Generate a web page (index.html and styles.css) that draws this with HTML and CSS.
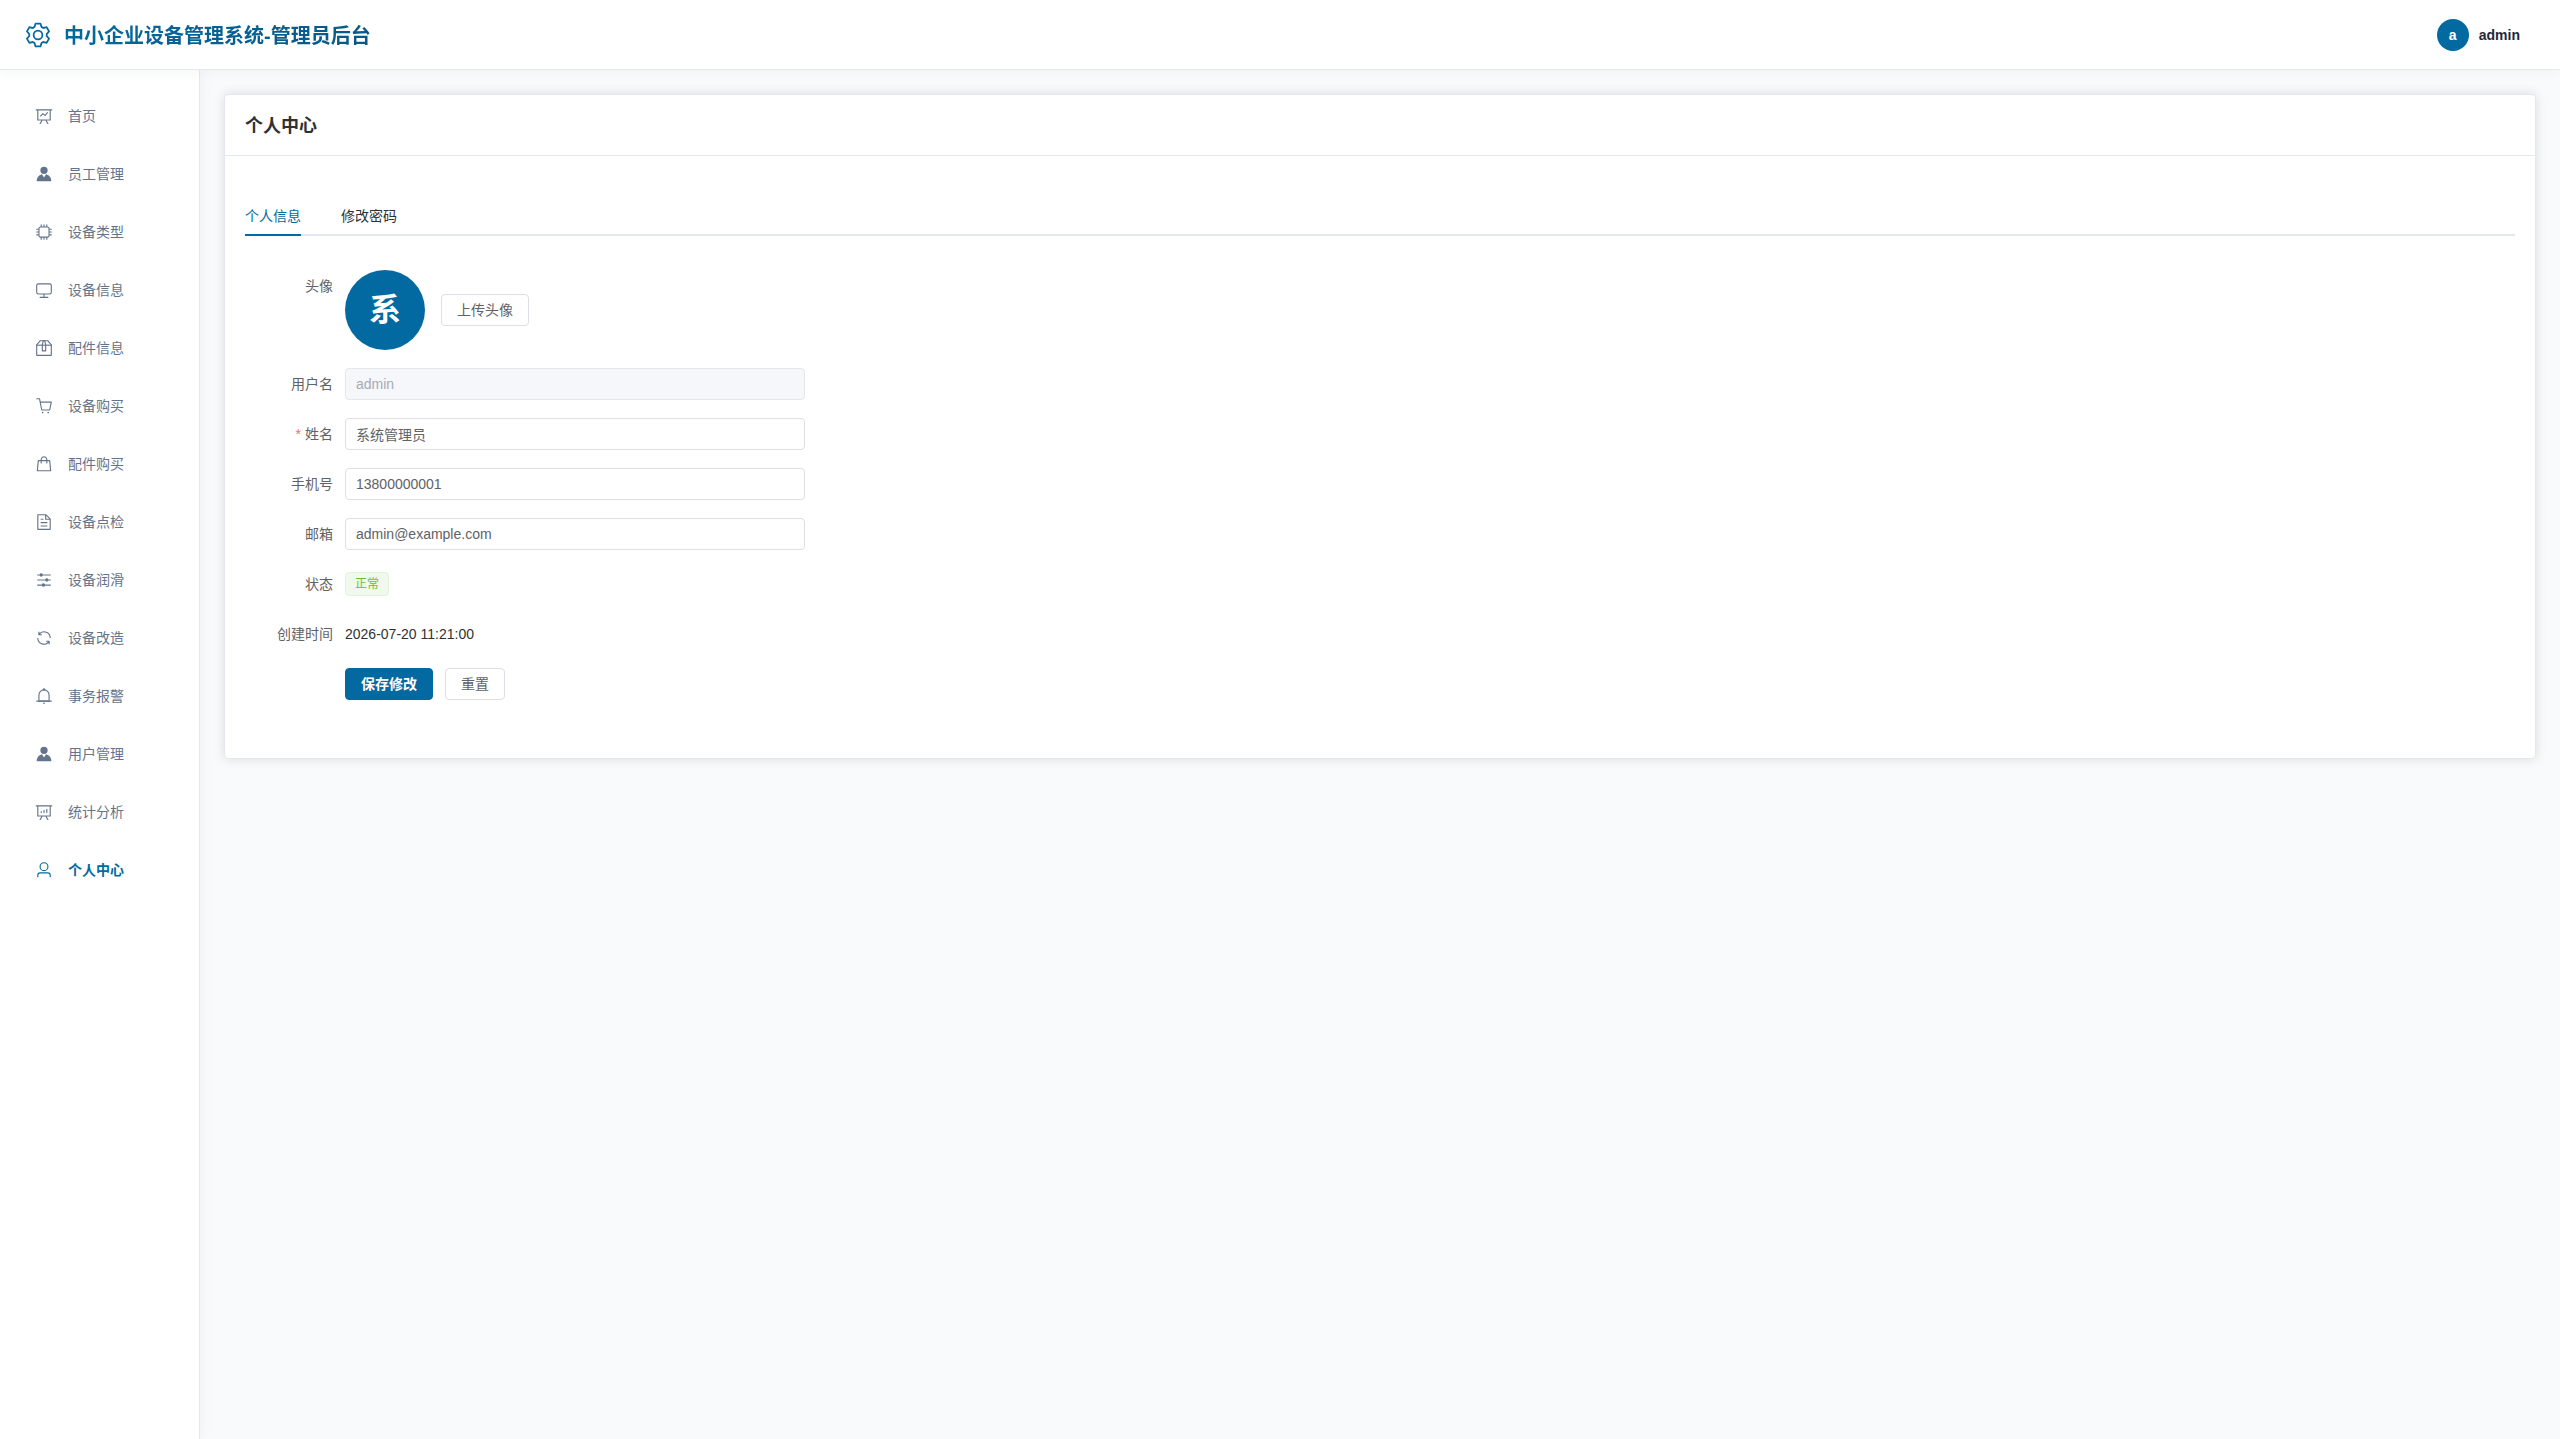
FILE: index.html
```html
<!DOCTYPE html>
<html lang="zh-CN">
	<head>
		<meta charset="UTF-8">
		<title>个人中心</title>
		<link rel="stylesheet" href="styles.css">
	</head>
	<body>
		<!-- 顶部 -->
		<header class="header">
			<div class="logo">
				<svg class="logo-icon" viewBox="0 0 1024 1024"><path d="M600.704 64a32 32 0 0 1 30.464 22.208l35.2 109.376c14.784 7.232 28.928 15.36 42.432 24.512l112.384-24.192a32 32 0 0 1 34.432 15.36L944.32 364.8a32 32 0 0 1-4.032 37.504l-77.12 85.12a357.12 357.12 0 0 1 0 49.024l77.12 85.248a32 32 0 0 1 4.032 37.504l-88.704 153.6a32 32 0 0 1-34.432 15.296L708.8 803.904c-13.44 9.088-27.648 17.28-42.368 24.512l-35.264 109.376A32 32 0 0 1 600.704 960H423.296a32 32 0 0 1-30.464-22.208L357.696 828.48a351.616 351.616 0 0 1-42.56-24.64l-112.32 24.256a32 32 0 0 1-34.432-15.36L79.68 659.2a32 32 0 0 1 4.032-37.504l77.12-85.248a357.12 357.12 0 0 1 0-48.896l-77.12-85.248A32 32 0 0 1 79.68 364.8l88.704-153.6a32 32 0 0 1 34.432-15.296l112.32 24.256c13.568-9.152 27.776-17.408 42.56-24.64l35.2-109.312A32 32 0 0 1 423.232 64H600.64zm-23.424 64H446.72l-36.352 113.088-24.512 11.968a294.113 294.113 0 0 0-34.816 20.096l-22.656 15.36-116.224-25.088-65.28 113.152 79.68 88.192-1.92 27.136a293.12 293.12 0 0 0 0 40.192l1.92 27.136-79.808 88.192 65.344 113.152 116.224-25.024 22.656 15.296a294.113 294.113 0 0 0 34.816 20.096l24.512 11.968L446.72 896h130.688l36.48-113.152 24.448-11.904a288.282 288.282 0 0 0 34.752-20.096l22.592-15.296 116.288 25.024 65.28-113.152-79.744-88.192 1.92-27.136a293.12 293.12 0 0 0 0-40.256l-1.92-27.136 79.808-88.128-65.344-113.152-116.288 24.96-22.592-15.232a287.616 287.616 0 0 0-34.752-20.096l-24.448-11.904L577.344 128zM512 320a192 192 0 1 1 0 384 192 192 0 0 1 0-384m0 64a128 128 0 1 0 0 256 128 128 0 0 0 0-256"/></svg>
				<span class="logo-text">中小企业设备管理系统-管理员后台</span>
			</div>
			<div class="user">
				<span class="user-avatar">a</span>
				<span>admin</span>
			</div>
		</header>

		<div class="container">
			<!-- 左侧菜单 -->
			<nav class="menu">
				<a href="#"><svg viewBox="0 0 1024 1024"><path d="M359.168 768H160a32 32 0 0 1-32-32V192H64a32 32 0 0 1 0-64h896a32 32 0 1 1 0 64h-64v544a32 32 0 0 1-32 32H665.216l110.848 192h-73.856L591.36 768H433.024L322.176 960H248.32zM832 192H192v512h640zM342.656 534.656a32 32 0 1 1-45.312-45.312L444.992 341.76l125.44 94.08L679.04 300.032a32 32 0 1 1 49.92 39.936L581.632 524.224 451.008 426.24 342.656 534.592z"/></svg>首页</a>
				<a href="#"><svg viewBox="0 0 1024 1024"><path d="M628.736 528.896A416 416 0 0 1 928 928H96a415.872 415.872 0 0 1 299.264-399.104L512 704zM720 304a208 208 0 1 1-416 0 208 208 0 0 1 416 0"/></svg>员工管理</a>
				<a href="#"><svg viewBox="0 0 1024 1024"><path d="M320 256a64 64 0 0 0-64 64v384a64 64 0 0 0 64 64h384a64 64 0 0 0 64-64V320a64 64 0 0 0-64-64zm0-64h384a128 128 0 0 1 128 128v384a128 128 0 0 1-128 128H320a128 128 0 0 1-128-128V320a128 128 0 0 1 128-128"/><path d="M512 64a32 32 0 0 1 32 32v128h-64V96a32 32 0 0 1 32-32m160 0a32 32 0 0 1 32 32v128h-64V96a32 32 0 0 1 32-32m-320 0a32 32 0 0 1 32 32v128h-64V96a32 32 0 0 1 32-32m160 896a32 32 0 0 1-32-32V800h64v128a32 32 0 0 1-32 32m160 0a32 32 0 0 1-32-32V800h64v128a32 32 0 0 1-32 32m-320 0a32 32 0 0 1-32-32V800h64v128a32 32 0 0 1-32 32M64 512a32 32 0 0 1 32-32h128v64H96a32 32 0 0 1-32-32m0-160a32 32 0 0 1 32-32h128v64H96a32 32 0 0 1-32-32m0 320a32 32 0 0 1 32-32h128v64H96a32 32 0 0 1-32-32m896-160a32 32 0 0 1-32 32H800v-64h128a32 32 0 0 1 32 32m0-160a32 32 0 0 1-32 32H800v-64h128a32 32 0 0 1 32 32m0 320a32 32 0 0 1-32 32H800v-64h128a32 32 0 0 1 32 32"/></svg>设备类型</a>
				<a href="#"><svg viewBox="0 0 1024 1024"><path d="M544 768v128h192a32 32 0 1 1 0 64H288a32 32 0 1 1 0-64h192V768H192A128 128 0 0 1 64 640V256a128 128 0 0 1 128-128h640a128 128 0 0 1 128 128v384a128 128 0 0 1-128 128zM192 192a64 64 0 0 0-64 64v384a64 64 0 0 0 64 64h640a64 64 0 0 0 64-64V256a64 64 0 0 0-64-64z"/></svg>设备信息</a>
				<a href="#"><svg viewBox="0 0 1024 1024"><path d="M317.056 128 128 344.064V896h768V344.064L706.944 128zm-14.528-64h418.944a32 32 0 0 1 24.064 10.88l206.528 236.096A32 32 0 0 1 960 332.032V928a32 32 0 0 1-32 32H96a32 32 0 0 1-32-32V332.032a32 32 0 0 1 7.936-21.12L278.4 75.008A32 32 0 0 1 302.528 64z"/><path d="M64 320h896v64H64z"/><path d="M448 327.872V640h128V327.872L526.08 128h-28.16zM448 64h128l64 256v352a32 32 0 0 1-32 32H416a32 32 0 0 1-32-32V320z"/></svg>配件信息</a>
				<a href="#"><svg viewBox="0 0 1024 1024"><path d="M432 928a48 48 0 1 1 0-96 48 48 0 0 1 0 96m320 0a48 48 0 1 1 0-96 48 48 0 0 1 0 96M96 128a32 32 0 0 1 0-64h160a32 32 0 0 1 31.36 25.728L320.64 256H928a32 32 0 0 1 31.296 38.72l-96 448A32 32 0 0 1 832 768H384a32 32 0 0 1-31.36-25.728L229.76 128zm314.24 576h395.904l82.304-384H333.44z"/></svg>设备购买</a>
				<a href="#"><svg viewBox="0 0 1024 1024"><path d="M320 288v-22.336C320 154.688 405.504 64 512 64s192 90.688 192 201.664v22.4h131.072a32 32 0 0 1 31.808 28.8l57.6 576a32 32 0 0 1-31.808 35.2H131.328a32 32 0 0 1-31.808-35.2l57.6-576a32 32 0 0 1 31.808-28.8H320zm64 0h256v-22.336C640 189.248 582.272 128 512 128s-128 61.248-128 137.664v22.4zm-64 64H217.92l-51.2 512h690.56l-51.264-512H704v96a32 32 0 1 1-64 0v-96H384v96a32 32 0 0 1-64 0z"/></svg>配件购买</a>
				<a href="#"><svg viewBox="0 0 1024 1024"><path d="M832 384H576V128H192v768h640zm-26.496-64L640 154.496V320zM160 64h480l256 256v608a32 32 0 0 1-32 32H160a32 32 0 0 1-32-32V96a32 32 0 0 1 32-32m160 448h384v64H320zm0-192h160v64H320zm0 384h384v64H320z"/></svg>设备点检</a>
				<a href="#"><svg viewBox="0 0 1024 1024"><path d="M389.44 768a96.064 96.064 0 0 1 181.12 0H896v64H570.56a96.064 96.064 0 0 1-181.12 0H128v-64zm192-288a96.064 96.064 0 0 1 181.12 0H896v64H762.56a96.064 96.064 0 0 1-181.12 0H128v-64zm-320-288a96.064 96.064 0 0 1 181.12 0H896v64H442.56a96.064 96.064 0 0 1-181.12 0H128v-64z"/></svg>设备润滑</a>
				<a href="#"><svg viewBox="0 0 1024 1024"><path d="M771.776 794.88A384 384 0 0 1 128 512h64a320 320 0 0 0 555.712 216.448H654.72a32 32 0 1 1 0-64h149.056a32 32 0 0 1 32 32v148.928a32 32 0 1 1-64 0v-50.56zM276.288 295.616h92.992a32 32 0 0 1 0 64H220.16a32 32 0 0 1-32-32V178.56a32 32 0 0 1 64 0v50.56A384 384 0 0 1 896.128 512h-64a320 320 0 0 0-555.776-216.384z"/></svg>设备改造</a>
				<a href="#"><svg viewBox="0 0 1024 1024"><path d="M512 64a64 64 0 0 1 64 64v64H448v-64a64 64 0 0 1 64-64"/><path d="M256 768h512V448a256 256 0 1 0-512 0zm256-640a320 320 0 0 1 320 320v384H192V448a320 320 0 0 1 320-320"/><path d="M96 768h832q32 0 32 32t-32 32H96q-32 0-32-32t32-32m352 128h128a64 64 0 0 1-128 0"/></svg>事务报警</a>
				<a href="#"><svg viewBox="0 0 1024 1024"><path d="M628.736 528.896A416 416 0 0 1 928 928H96a415.872 415.872 0 0 1 299.264-399.104L512 704zM720 304a208 208 0 1 1-416 0 208 208 0 0 1 416 0"/></svg>用户管理</a>
				<a href="#"><svg viewBox="0 0 1024 1024"><path d="m665.216 768 110.848 192h-73.856L591.36 768H433.024L322.176 960H248.32l110.848-192H160a32 32 0 0 1-32-32V192H64a32 32 0 0 1 0-64h896a32 32 0 1 1 0 64h-64v544a32 32 0 0 1-32 32zM832 192H192v512h640zM352 448a32 32 0 0 1 32 32v64a32 32 0 0 1-64 0v-64a32 32 0 0 1 32-32m160-64a32 32 0 0 1 32 32v128a32 32 0 0 1-64 0V416a32 32 0 0 1 32-32m160-64a32 32 0 0 1 32 32v192a32 32 0 1 1-64 0V352a32 32 0 0 1 32-32"/></svg>统计分析</a>
				<a href="#" class="on"><svg viewBox="0 0 1024 1024"><path d="M512 512a192 192 0 1 0 0-384 192 192 0 0 0 0 384m0 64a256 256 0 1 1 0-512 256 256 0 0 1 0 512m320 320v-96a96 96 0 0 0-96-96H288a96 96 0 0 0-96 96v96a32 32 0 1 1-64 0v-96a160 160 0 0 1 160-160h448a160 160 0 0 1 160 160v96a32 32 0 1 1-64 0"/></svg>个人中心</a>
			</nav>

			<!-- 内容 -->
			<main class="main">
				<section class="card">
					<h1 class="card-title">个人中心</h1>
					<div class="card-body">
						<div class="tabs">
							<button type="button" class="tab on">个人信息</button>
							<button type="button" class="tab">修改密码</button>
						</div>

						<form class="form">
							<div class="row">
								<span class="label">头像</span>
								<div class="upload">
									<span class="avatar">系</span>
									<button type="button" class="btn">上传头像</button>
								</div>
							</div>
							<div class="row">
								<label class="label" for="username">用户名</label>
								<input class="input" id="username" type="text" value="admin" disabled>
							</div>
							<div class="row">
								<label class="label required" for="realname">姓名</label>
								<input class="input" id="realname" type="text" value="系统管理员">
							</div>
							<div class="row">
								<label class="label" for="phone">手机号</label>
								<input class="input" id="phone" type="text" value="13800000001">
							</div>
							<div class="row">
								<label class="label" for="email">邮箱</label>
								<input class="input" id="email" type="text" value="admin@example.com">
							</div>
							<div class="row">
								<span class="label">状态</span>
								<div class="value"><span class="tag">正常</span></div>
							</div>
							<div class="row">
								<span class="label">创建时间</span>
								<div class="value">2026-07-20 11:21:00</div>
							</div>
							<div class="row btns">
								<button type="button" class="btn primary">保存修改</button>
								<button type="reset" class="btn">重置</button>
							</div>
						</form>
					</div>
				</section>
			</main>
		</div>
	</body>
</html>
```

FILE: styles.css
```css
*{
	margin: 0;
	padding: 0;
	box-sizing: border-box;
}
body{
	min-height: 100vh;
	display: flex;
	flex-direction: column;
	font-family: "Liberation Sans","Noto Sans CJK SC",sans-serif;
	font-size: 14px;
	line-height: 20px;
	color: #303133;
	background-color: #f8fafc;
}
a{
	text-decoration: none;
}
button,input{
	font-family: inherit;
	font-size: 14px;
	line-height: 20px;
}
svg{
	fill: currentColor;
}

/* 顶部 */
.header{
	height: 70px;
	padding: 0 40px 0 24px;
	display: flex;
	align-items: center;
	justify-content: space-between;
	background-color: #fff;
	border-bottom: solid 1px #e2e8f0;
	box-shadow: 0 2px 12px rgba(0,0,0,.04);
	position: relative;
	z-index: 2;
}
.logo{
	display: flex;
	align-items: center;
	gap: 12px;
	color: #0369a1;
}
.logo-icon{
	width: 28px;
	height: 28px;
}
.logo-text{
	padding-top: 2px;
	font-size: 20px;
	font-weight: bold;
	line-height: 28px;
	color: transparent;
	background: linear-gradient(135deg,#0369a1,#075985);
	-webkit-background-clip: text;
	background-clip: text;
}
.user{
	display: flex;
	align-items: center;
	gap: 10px;
	font-weight: bold;
	color: #1e293b;
}
.user-avatar{
	width: 32px;
	height: 32px;
	border-radius: 50%;
	line-height: 32px;
	text-align: center;
	color: #fff;
	background-color: #0369a1;
}

/* 左侧菜单 */
.container{
	flex: 1;
	display: flex;
}
.menu{
	width: 200px;
	padding: 21px 12px;
	display: flex;
	flex-direction: column;
	gap: 8px;
	background-color: #fff;
	border-right: solid 1px #e2e8f0;
	box-shadow: 2px 0 12px rgba(0,0,0,.04);
}
.menu a{
	height: 50px;
	padding: 0 23px;
	display: flex;
	align-items: center;
	gap: 15px;
	color: #64748b;
}
.menu svg{
	width: 18px;
	height: 18px;
}
.menu .on{
	color: #0369a1;
	font-weight: bold;
}

/* 内容 */
.main{
	flex: 1;
	padding: 24px;
}
.card{
	background-color: #fff;
	border: solid 1px #e4e7ed;
	border-radius: 4px;
	box-shadow: 0 0 12px rgba(0,0,0,.12);
}
.card-title{
	padding: 19px 20px 17px;
	font-size: 18px;
	line-height: 24px;
	border-bottom: solid 1px #e4e7ed;
}
.card-body{
	padding: 40px 20px;
}
.tabs{
	display: flex;
	gap: 40px;
	border-bottom: solid 2px #e4e7ed;
}
.tab{
	height: 40px;
	margin-bottom: -2px;
	padding-top: 2px;
	border: 0;
	border-bottom: solid 2px transparent;
	background: none;
	color: #303133;
	cursor: pointer;
}
.tabs .on{
	color: #0369a1;
	border-color: #0369a1;
}

/* 表单 */
.form{
	max-width: 560px;
	padding-top: 34px;
}
.row{
	display: flex;
	margin-bottom: 18px;
}
.label{
	width: 100px;
	padding-right: 12px;
	line-height: 32px;
	text-align: right;
	color: #606266;
}
.required::before{
	content: "*";
	margin-right: 4px;
	color: #f56c6c;
}
.input{
	flex: 1;
	height: 32px;
	padding: 0 10px;
	border: solid 1px #dcdfe6;
	border-radius: 4px;
	background-color: #fff;
	color: #606266;
}
.input:disabled{
	background-color: #f5f7fa;
	border-color: #e4e7ed;
	color: #a8abb2;
}
.value{
	height: 32px;
	display: flex;
	align-items: center;
}
.upload{
	display: flex;
	align-items: center;
	gap: 16px;
}
.avatar{
	width: 80px;
	height: 80px;
	border-radius: 50%;
	line-height: 80px;
	text-align: center;
	font-size: 32px;
	font-weight: bold;
	color: #fff;
	background-color: #0369a1;
}
.tag{
	height: 24px;
	padding: 0 9px;
	border: solid 1px #e1f3d8;
	border-radius: 4px;
	font-size: 12px;
	line-height: 22px;
	color: #67c23a;
	background-color: #f0f9eb;
}
.btns{
	padding-left: 100px;
	gap: 12px;
}
.btn{
	height: 32px;
	padding: 0 15px;
	border: solid 1px #dcdfe6;
	border-radius: 4px;
	background-color: #fff;
	color: #606266;
	cursor: pointer;
}
.primary{
	background-color: #0369a1;
	border-color: #0369a1;
	color: #fff;
	font-weight: bold;
}
```
